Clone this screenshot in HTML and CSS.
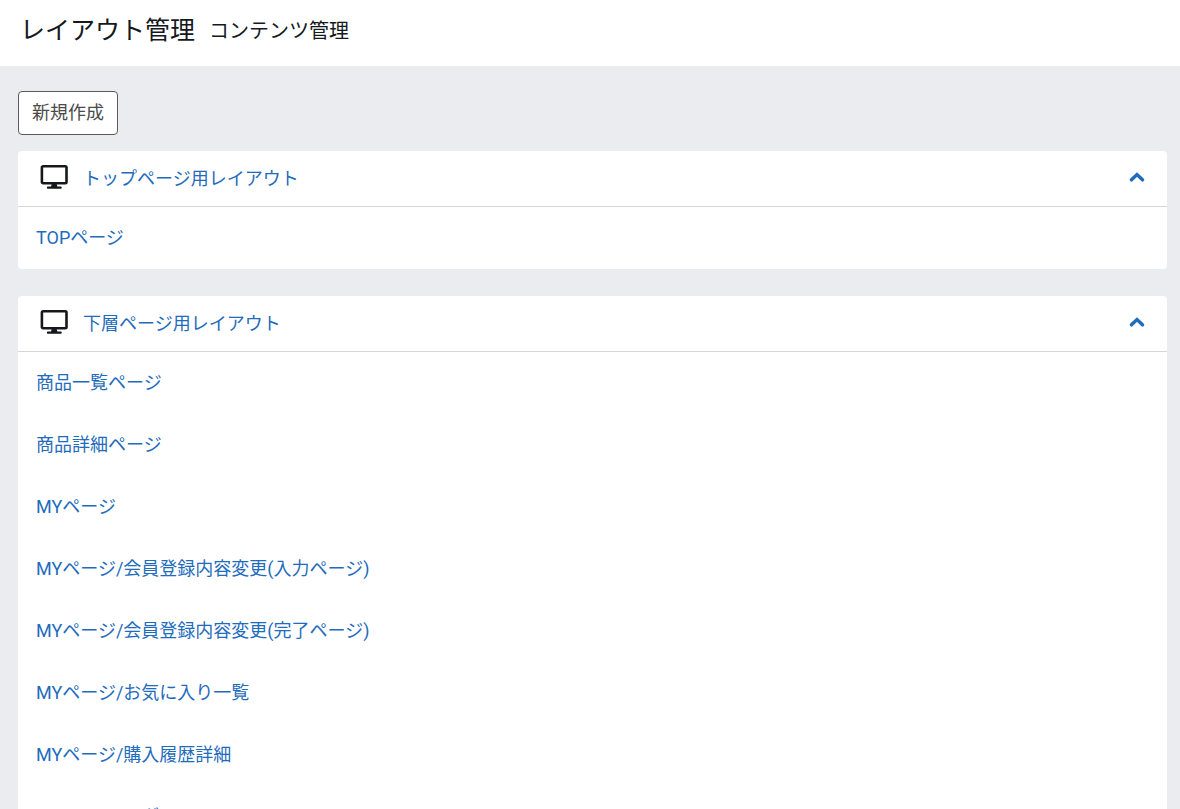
FILE: index.html
```html
<!DOCTYPE html>
<html lang="ja">
<head>
  <meta charset="UTF-8">
  <meta name="viewport" content="width=device-width, initial-scale=1.0">
  <title>レイアウト管理</title>
  <link rel="stylesheet" href="styles.css">
</head>
<body>

  <header class="page-header">
    <h1>レイアウト管理</h1>
    <span class="sub-title">コンテンツ管理</span>
  </header>

  <main class="content">
    <button type="button" class="btn-new">新規作成</button>

    <!-- トップページ用 -->
    <section class="card">
      <div class="card-header">
        <svg class="icon-pc" viewBox="0 0 28 24" aria-hidden="true">
          <rect x="1.9" y="1.3" width="24.6" height="17" rx="1.2" fill="none" stroke="currentColor" stroke-width="2.6"/>
          <path d="M11.7 19h5l.7 3h-6.4z"/>
          <rect x="6.8" y="21.6" width="15" height="2.2" rx="1.1"/>
        </svg>
        <h2><a href="#top-layout">トップページ用レイアウト</a></h2>
        <a href="#top-layout" class="toggle" aria-label="閉じる">
          <svg viewBox="0 0 16 12" aria-hidden="true"><path d="M2.5 8.8L8 3.6l5.5 5.2"/></svg>
        </a>
      </div>
      <ul class="page-list" id="top-layout">
        <li><a href="#">TOPページ</a></li>
      </ul>
    </section>

    <!-- 下層ページ用 -->
    <section class="card">
      <div class="card-header">
        <svg class="icon-pc" viewBox="0 0 28 24" aria-hidden="true">
          <rect x="1.9" y="1.3" width="24.6" height="17" rx="1.2" fill="none" stroke="currentColor" stroke-width="2.6"/>
          <path d="M11.7 19h5l.7 3h-6.4z"/>
          <rect x="6.8" y="21.6" width="15" height="2.2" rx="1.1"/>
        </svg>
        <h2><a href="#under-layout">下層ページ用レイアウト</a></h2>
        <a href="#under-layout" class="toggle" aria-label="閉じる">
          <svg viewBox="0 0 16 12" aria-hidden="true"><path d="M2.5 8.8L8 3.6l5.5 5.2"/></svg>
        </a>
      </div>
      <ul class="page-list" id="under-layout">
        <li><a href="#">商品一覧ページ</a></li>
        <li><a href="#">商品詳細ページ</a></li>
        <li><a href="#">MYページ</a></li>
        <li><a href="#">MYページ/会員登録内容変更(入力ページ)</a></li>
        <li><a href="#">MYページ/会員登録内容変更(完了ページ)</a></li>
        <li><a href="#">MYページ/お気に入り一覧</a></li>
        <li><a href="#">MYページ/購入履歴詳細</a></li>
        <li><a href="#">MYページ/ログイン</a></li>
      </ul>
    </section>
  </main>

</body>
</html>
```
FILE: styles.css
```css
* {
  box-sizing: border-box;
}

body {
  margin: 0;
  background-color: #ebecf0;
  color: #15191d;
  font-family: Roboto, "Noto Sans CJK JP", sans-serif;
  font-size: 18px;
  line-height: 26px;
}

a {
  color: #1f6cbc;
  text-decoration: none;
}

h1, h2 {
  margin: 0;
  font-weight: 400;
}

.page-header {
  display: flex;
  align-items: center;
  gap: 14px;
  padding: 13px 20px 17px;
  background-color: #fff;
}

.page-header h1 {
  font-size: 25px;
  line-height: 36px;
}

.sub-title {
  font-size: 20px;
}

.content {
  padding: 25px 13px 25px 18px;
}

.btn-new {
  display: block;
  margin-bottom: 16px;
  padding: 8px 13px;
  background-color: #fff;
  color: #4a4a4a;
  border: 1px solid #5a5a5a;
  border-radius: 4px;
  font: inherit;
  cursor: pointer;
}

.card {
  margin-bottom: 27px;
  background-color: #fff;
  border-radius: 4px;
}

.card-header {
  display: flex;
  align-items: center;
  height: 56px;
  padding: 0 22px;
  border-bottom: 1px solid #d5d6d8;
}

.card-header h2 {
  flex: 1;
  margin-left: 15px;
  font-size: 18px;
}

.icon-pc {
  width: 28px;
  height: 24px;
  margin-bottom: 4px;
  color: #15191d;
  fill: currentColor;
}

.toggle {
  display: flex;
  margin-bottom: 4px;
}

.toggle svg {
  width: 16px;
  height: 12px;
  fill: none;
  stroke: #1f6cbc;
  stroke-width: 3.5;
  stroke-linecap: round;
}

.page-list {
  margin: 0;
  padding: 0;
  list-style: none;
}

.page-list li {
  padding: 18px;
}
```
